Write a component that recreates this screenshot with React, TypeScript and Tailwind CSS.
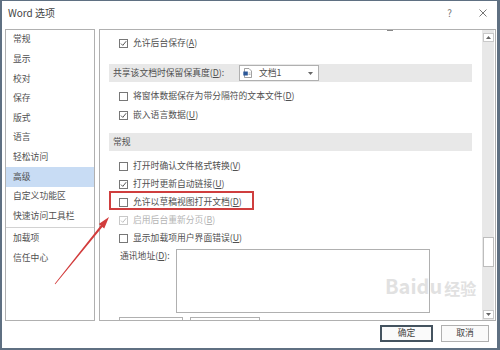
import React from "react";

const navItems = ["常规", "显示", "校对", "保存", "版式", "语言", "轻松访问", "高级", "自定义功能区", "快速访问工具栏"];
const navExtra = ["加载项", "信任中心"];

function Check({ checked, disabled }: { checked?: boolean; disabled?: boolean }) {
  return (
    <span
      className={`relative h-[9px] w-[9px] shrink-0 border bg-white ${disabled ? "border-[#c8c8c8]" : "border-[#777]"}`}
    >
      {checked && (
        <svg viewBox="0 0 7 7" className="absolute inset-0 h-[7px] w-[7px]">
          <path
            d="M1 3.6 L2.8 5.4 L6.2 1.2"
            fill="none"
            stroke={disabled ? "#b8b8b8" : "#444"}
            strokeWidth="0.9"
          />
        </svg>
      )}
    </span>
  );
}

function Opt({
  text,
  k,
  checked,
  disabled,
  tall,
  children,
}: {
  text: string;
  k: string;
  checked?: boolean;
  disabled?: boolean;
  tall?: boolean;
  children?: React.ReactNode;
}) {
  return (
    <div className={`relative flex items-center gap-[5px] pl-[19px] ${tall ? "h-[19px]" : "h-[18px]"}`}>
      <Check checked={checked} disabled={disabled} />
      <span className={`whitespace-nowrap ${disabled ? "text-[#b4b4b4]" : ""}`}>
        {text}(<span className="underline">{k}</span>)
      </span>
      {children}
    </div>
  );
}

function Header({ children }: { children: React.ReactNode }) {
  return <div className="ml-[9px] flex h-[18px] w-[363px] items-center bg-[#e8e8e8] pl-[4px]">{children}</div>;
}

function Arrow({ up }: { up?: boolean }) {
  return (
    <svg viewBox="0 0 5 3" className="h-[3px] w-[5px]">
      <path d={up ? "M0 3 L2.5 0 L5 3 Z" : "M0 0 L2.5 3 L5 0 Z"} fill="#666" />
    </svg>
  );
}

export default function App() {
  return (
    <div className="relative h-[350px] w-[500px] overflow-hidden border-t border-b-2 border-l-2 border-r-[3px] border-[#5f7082] bg-white font-['Noto_Sans_CJK_SC','Noto_Sans',sans-serif] text-[8.8px] leading-none text-[#505050]">
      {/* title bar */}
      <div className="flex h-[23px] items-center justify-between pl-[6px] pr-[10px]">
        <span className="text-[10px] text-[#444]">Word 选项</span>
        <div className="flex items-center gap-[27px]">
          <span className="text-[10px] text-[#777]">?</span>
          <svg viewBox="0 0 8 8" className="h-[8px] w-[8px]">
            <path d="M0.5 0.5 L7.5 7.5 M7.5 0.5 L0.5 7.5" stroke="#666" strokeWidth="0.9" />
          </svg>
        </div>
      </div>

      {/* body */}
      <div className="mt-[5px] flex gap-[4px] pl-[3px]">
        {/* nav */}
        <div className="h-[292px] w-[90px] border border-[#b0b0b0]">
          {navItems.map((n) => (
            <div
              key={n}
              className={`flex h-[19.6px] items-center pl-[7px] whitespace-nowrap ${n === "高级" ? "bg-[#c8dcf4]" : ""}`}
            >
              {n}
            </div>
          ))}
          <div className="mt-[1px] h-px w-full bg-[#d2d2d2]" />
          {navExtra.map((n) => (
            <div key={n} className="flex h-[20px] items-center pl-[7px]">
              {n}
            </div>
          ))}
        </div>

        {/* content */}
        <div className="flex h-[292px] w-[397px] overflow-hidden border border-[#b0b0b0]">
          <div className="relative flex-1 overflow-hidden">
            <div className="absolute left-[287px] top-0 h-px w-[6px] bg-[#888]" />
            <div className="mt-[-15px]">
              <div className="flex h-[19px] items-center pl-[19px]">
                <Check checked />
              </div>
              <Opt text="允许后台保存" k="A" checked tall />

              <div className="mt-[11px]">
                <Header>
                  <span className="w-[126px] whitespace-nowrap">
                    共享该文档时保留保真度(<span className="underline">D</span>):
                  </span>
                  <div className="flex h-[16px] w-[80px] items-center border border-[#b0b0b0] bg-white pl-[3px] pr-[5px]">
                    <svg viewBox="0 0 9 10" className="h-[10px] w-[9px]">
                      <path d="M1.5 0.5 H6 L8.5 3 V9.5 H1.5 Z" fill="#fff" stroke="#7a7a7a" strokeWidth="0.7" />
                      <rect x="0.3" y="3.5" width="4.5" height="4" fill="#2b5797" />
                      <path d="M5.5 5 H7.5 M5.5 6.5 H7.5" stroke="#8a8a8a" strokeWidth="0.6" />
                    </svg>
                    <span className="ml-[7px]">文档1</span>
                    <span className="ml-auto">
                      <Arrow />
                    </span>
                  </div>
                </Header>
              </div>

              <div className="mt-[5px]">
                <Opt text="将窗体数据保存为带分隔符的文本文件" k="D" tall />
                <Opt text="嵌入语言数据" k="U" checked tall />
              </div>

              <div className="mt-[8px]">
                <Header>常规</Header>
              </div>
              <div className="mt-[6px]">
                <Opt text="打开时确认文件格式转换" k="V" />
                <Opt text="打开时更新自动链接" k="U" checked />
                <Opt text="允许以草稿视图打开文档" k="D">
                  <div className="absolute left-[9px] top-[-2px] h-[19px] w-[145px] border-2 border-[#cf3e3e]" />
                </Opt>
                <Opt text="启用后台重新分页" k="B" checked disabled />
                <Opt text="显示加载项用户界面错误" k="U" />
              </div>

              <div className="mt-[2px] flex pl-[20px]">
                <span className="w-[56px] whitespace-nowrap pt-[3px]">
                  通讯地址(<span className="underline">D</span>):
                </span>
                <div className="h-[64px] w-[254px] border border-[#b0b0b0] bg-white" />
              </div>
              <div className="mt-[4px] flex gap-[7px] pl-[19px]">
                <div className="h-[20px] w-[64px] border border-[#b0b0b0]" />
                <div className="h-[20px] w-[70px] border border-[#b0b0b0]" />
              </div>
            </div>
          </div>

          {/* scrollbar */}
          <div className="mr-[1px] flex w-[12px] flex-col items-center bg-[#e8e8e8] pt-[3px]">
            <div className="flex h-[9px] w-[11px] items-center justify-center border border-[#c9c9c9] bg-white">
              <Arrow up />
            </div>
            <div className="mt-[195px] h-[30px] w-[11px] border border-[#bdbdbd] bg-white" />
            <div className="mt-[43px] flex h-[9px] w-[11px] items-center justify-center border border-[#c9c9c9] bg-white">
              <Arrow />
            </div>
          </div>
        </div>
      </div>

      {/* buttons */}
      <div className="mt-[4px] flex justify-end gap-[8px] pr-[8px]">
        <button className="flex h-[17px] w-[53px] items-center justify-center border-2 border-[#44535f] bg-[#fafafa] text-[#444]">
          确定
        </button>
        <button className="flex h-[17px] w-[48px] items-center justify-center border border-[#b0b0b0] bg-[#fafafa] text-[#444]">
          取消
        </button>
      </div>

      {/* watermark */}
      <div className="pointer-events-none absolute left-[383px] top-[275px] flex items-end text-[20px] font-bold leading-none text-[#dadada] opacity-80">
        <span>Bai</span>
        <span>du</span>
        <span className="ml-[2px] text-[16px]">经验</span>
      </div>

      {/* red arrow */}
      <svg className="pointer-events-none absolute left-0 top-0 h-[350px] w-[500px]" viewBox="0 0 500 350">
        <polygon
          points="52.7,282.75 98.64,224.61 96.77,223.1 107,216 102.23,227.5 100.36,225.99 53.3,283.25"
          fill="#d23c3c"
        />
      </svg>
    </div>
  );
}
